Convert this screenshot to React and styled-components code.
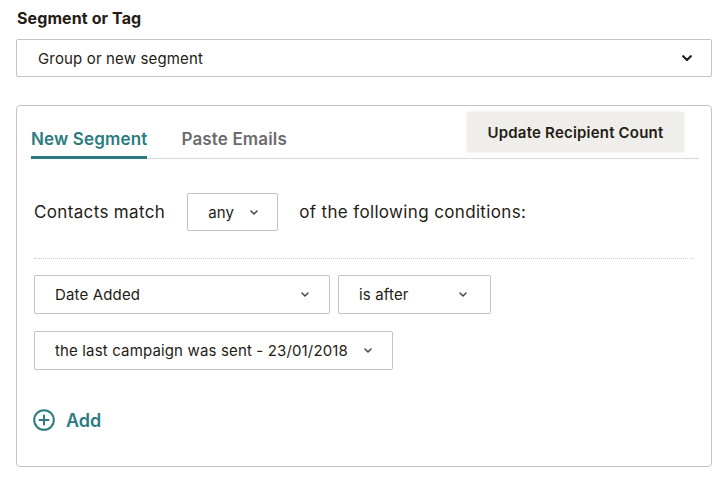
import React from "react";
import styled, { createGlobalStyle } from "styled-components";

const Global = createGlobalStyle`
  html, body { margin: 0; padding: 0; background: #ffffff; }
  body { font-family: Inter, "Liberation Sans", Arial, sans-serif; color: #241c15; }
`;

const Page = styled.div`
  width: 696px;
  padding: 8px 0 0 16px;
`;

const Label = styled.div`
  font-size: 16px;
  font-weight: 700;
  line-height: 20px;
  letter-spacing: 0.1px;
  padding-left: 1px;
  color: #241c15;
`;

const SelectBox = styled.div`
  display: flex;
  align-items: center;
  justify-content: space-between;
  box-sizing: border-box;
  height: ${(p) => p.$h || 38}px;
  width: ${(p) => (p.$w ? `${p.$w}px` : "auto")};
  padding: 0 ${(p) => p.$pr || 20}px 0 ${(p) => p.$pl || 20}px;
  gap: ${(p) => p.$gap || 16}px;
  border: 1px solid #c4c4c4;
  border-radius: 2px;
  background: #fff;
  font-size: 15px;
  letter-spacing: 0.15px;
  color: #241c15;
  flex: none;
  svg { flex: none; }
`;

const TopSelect = styled(SelectBox)`
  margin-top: 11px;
`;

const Panel = styled.div`
  margin-top: 28px;
  box-sizing: border-box;
  height: 362px;
  border: 1px solid #c4c4c4;
  border-radius: 4px;
  display: flex;
  flex-direction: column;
`;

const Header = styled.div`
  display: flex;
  align-items: flex-end;
  justify-content: space-between;
  margin: 0 12px 0 14px;
  border-bottom: 1px solid #d9d9d9;
  height: 52px;
`;

const Tabs = styled.div`
  display: flex;
  gap: 34px;
`;

const Tab = styled.div`
  font-size: 17px;
  font-weight: 600;
  letter-spacing: 0.15px;
  color: ${(p) => (p.$active ? "#2b7b80" : "#6c6c6c")};
  padding-bottom: 6px;
  margin-bottom: -1px;
  border-bottom: 3px solid ${(p) => (p.$active ? "#2b7b80" : "transparent")};
  line-height: 22px;
`;

const UpdateButton = styled.button`
  align-self: flex-start;
  margin-top: 6px;
  margin-right: 15px;
  width: 217px;
  height: 40px;
  border: none;
  background: #efeeea;
  box-shadow: 0 0 4px rgba(0, 0, 0, 0.08);
  font-family: inherit;
  font-size: 15px;
  font-weight: 600;
  letter-spacing: 0.2px;
  color: #241c15;
`;

const Body = styled.div`
  padding: 0 17px;
  display: flex;
  flex-direction: column;
`;

const MatchRow = styled.div`
  display: flex;
  align-items: center;
  margin-top: 34px;
  font-size: 17px;
  letter-spacing: 0.35px;
  color: #241c15;
`;

const MatchText = styled.span`
  margin: 0 ${(p) => p.$mr || 0}px 0 ${(p) => p.$ml || 0}px;
`;

const Divider = styled.div`
  margin-top: 27px;
  border-top: 1px dotted #cfcfcf;
`;

const ConditionRow = styled.div`
  display: flex;
  gap: 8px;
  margin-top: ${(p) => p.$mt}px;
`;

const AddRow = styled.div`
  display: flex;
  align-items: center;
  gap: 11px;
  margin-top: 39px;
  margin-left: -1px;
  color: #2b7b80;
  font-size: 18px;
  font-weight: 600;
`;

const Chevron = ({ bold }) =>
  bold ? (
    <svg width="10" height="7" viewBox="0 0 10 7">
      <path d="M1.2 1.2 L5 5 L8.8 1.2" fill="none" stroke="#241c15" strokeWidth="2.2" strokeLinecap="round" strokeLinejoin="round" />
    </svg>
  ) : (
    <svg width="8" height="5" viewBox="0 0 8 5">
      <path d="M1 1 L4 4 L7 1" fill="none" stroke="#4a4540" strokeWidth="1.5" strokeLinecap="round" strokeLinejoin="round" />
    </svg>
  );

const PlusCircle = () => (
  <svg width="22" height="22" viewBox="0 0 22 22">
    <circle cx="11" cy="11" r="9.8" fill="none" stroke="#2b7b80" strokeWidth="2" />
    <path d="M11 6.5 V15.5 M6.5 11 H15.5" stroke="#2b7b80" strokeWidth="2" strokeLinecap="round" />
  </svg>
);

export default function App() {
  return (
    <>
      <Global />
      <Page>
        <Label>Segment or Tag</Label>
        <TopSelect $pl={21} $pr={19}>
          <span>Group or new segment</span>
          <Chevron bold />
        </TopSelect>
        <Panel>
          <Header>
            <Tabs>
              <Tab $active>New Segment</Tab>
              <Tab>Paste Emails</Tab>
            </Tabs>
            <UpdateButton>Update Recipient Count</UpdateButton>
          </Header>
          <Body>
            <MatchRow>
              <MatchText $mr={22}>Contacts match</MatchText>
              <SelectBox $w={91} $pr={22}>
                <span>any</span>
                <Chevron />
              </SelectBox>
              <MatchText $ml={21}>of the following conditions:</MatchText>
            </MatchRow>
            <Divider />
            <ConditionRow $mt={16}>
              <SelectBox $w={296} $h={39}>
                <span>Date Added</span>
                <Chevron />
              </SelectBox>
              <SelectBox $w={153} $h={39} $pr={23}>
                <span>is after</span>
                <Chevron />
              </SelectBox>
            </ConditionRow>
            <ConditionRow $mt={17}>
              <SelectBox $h={39}>
                <span>the last campaign was sent - 23/01/2018</span>
                <Chevron />
              </SelectBox>
            </ConditionRow>
            <AddRow>
              <PlusCircle />
              <span>Add</span>
            </AddRow>
          </Body>
        </Panel>
      </Page>
    </>
  );
}
